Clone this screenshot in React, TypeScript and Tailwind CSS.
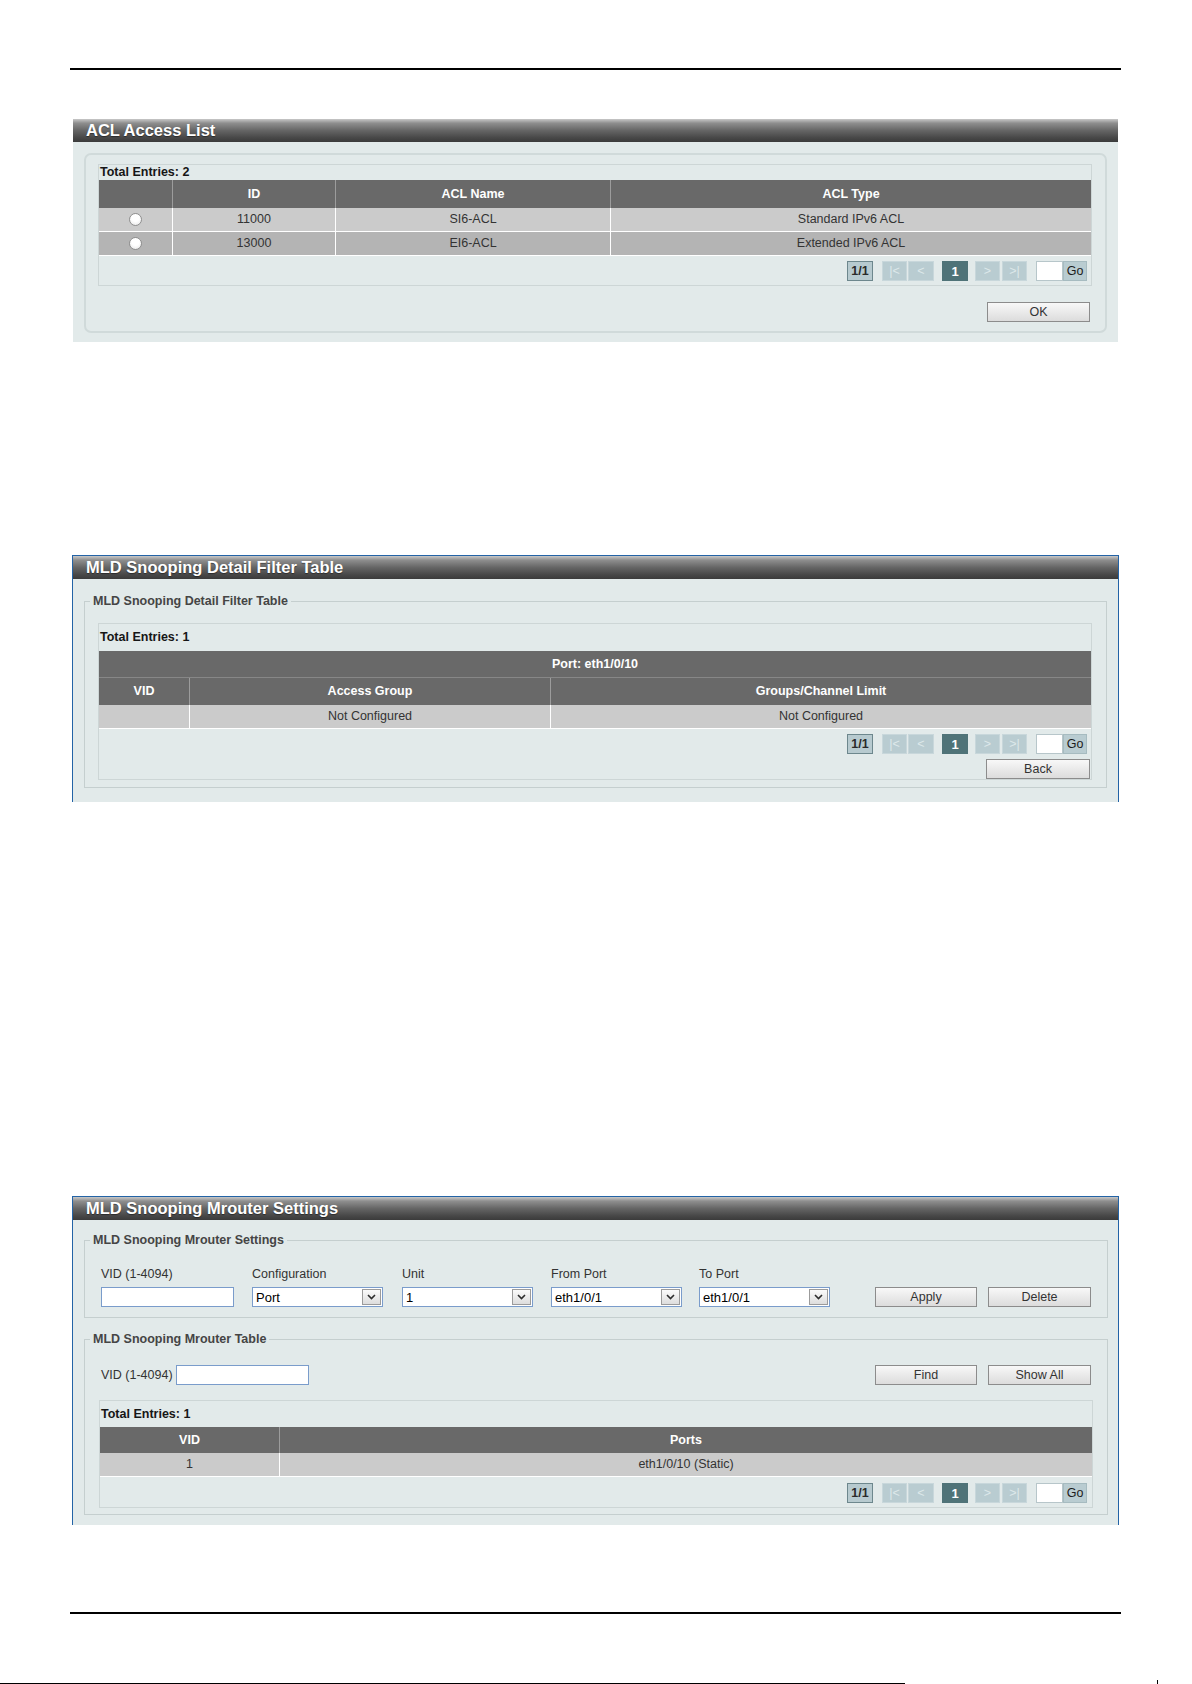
import React from "react";

const font = "font-['Liberation_Sans',Arial,Helvetica,sans-serif]";

const aclCols = "grid grid-cols-[73px_163px_275px_481px]";
const filterCols = "grid grid-cols-[90px_361px_541px]";
const mrouterCols = "grid grid-cols-[179px_813px]";

function TitleBar({ children }: { children: React.ReactNode }) {
  return (
    <div className="h-[23px] flex items-center pl-[13px] bg-[linear-gradient(to_bottom,#c8c8c8_0%,#8e8e8e_18%,#656565_50%,#474747_82%,#3b3b3b_100%)] text-white font-bold text-[16.5px] leading-none [text-shadow:0_1px_1px_rgba(0,0,0,0.45)]">
      {children}
    </div>
  );
}

function Panel({
  title,
  framed,
  className,
  children,
}: {
  title: string;
  framed?: boolean;
  className?: string;
  children: React.ReactNode;
}) {
  return (
    <section
      className={`ml-[72px] w-[1047px] border-x border-t ${
        framed ? "border-[#2363a6]" : "border-transparent"
      } ${className ?? ""}`}
    >
      <TitleBar>{title}</TitleBar>
      <div className="bg-[#e2eaea]">{children}</div>
    </section>
  );
}

function Btn({ label, className }: { label: string; className?: string }) {
  return (
    <button
      type="button"
      className={`block h-[20px] border border-[#8c8c8c] bg-[linear-gradient(to_bottom,#f8f8f8,#dcdcdc)] text-[12.5px] leading-none text-[#333] ${
        className ?? "w-[103px]"
      }`}
    >
      {label}
    </button>
  );
}

function PagerOff({ label, className }: { label: string; className: string }) {
  return (
    <span
      className={`h-[20px] flex items-center justify-center bg-[#b9ccd1] border border-[#c8d7db] text-[#dde8ea] ${className}`}
    >
      {label}
    </span>
  );
}

function Pager() {
  return (
    <div className="flex items-center justify-end h-[20px] text-[12.5px] leading-none">
      <span className="w-[26px] h-[20px] flex items-center justify-center bg-[#b7cacf] border border-[#6d878d] font-bold text-[#2a2a2a]">
        1/1
      </span>
      <PagerOff label="|<" className="ml-[9px] w-[25px]" />
      <PagerOff label="<" className="ml-[1px] w-[26px]" />
      <span className="ml-[8px] w-[26px] h-[20px] flex items-center justify-center bg-[#4f7378] font-bold text-[13px] text-white">
        1
      </span>
      <PagerOff label=">" className="ml-[7px] w-[25px]" />
      <PagerOff label=">|" className="ml-[2px] w-[25px]" />
      <span className="ml-[9px] w-[27px] h-[20px] bg-white border border-[#b7c6ca]" />
      <span className="w-[24px] h-[20px] flex items-center justify-center bg-[#b9ccd1] border border-[#a6bbc0] text-[#1c1c1c]">
        Go
      </span>
    </div>
  );
}

function Radio() {
  return (
    <span className="w-[13px] h-[13px] rounded-full border border-[#8f8f8f] bg-[radial-gradient(circle_at_50%_35%,#ffffff_40%,#e4e4e4_100%)]" />
  );
}

function TotalRow({ count, height }: { count: number; height: string }) {
  return (
    <div className={`${height} flex items-center pl-[1px] text-[12.5px] font-bold text-[#161616]`}>
      Total Entries: {count}
    </div>
  );
}

function HeadRow({ cols, cells, height }: { cols: string; cells: string[]; height: string }) {
  return (
    <div className={`${cols} ${height} bg-[#696969] text-white font-bold text-[12.5px]`}>
      {cells.map((c, i) => (
        <div
          key={i}
          className={`flex items-center justify-center ${i > 0 ? "border-l border-[#9c9c9c]" : ""}`}
        >
          {c}
        </div>
      ))}
    </div>
  );
}

function BodyRow({
  cols,
  cells,
  shade,
}: {
  cols: string;
  cells: React.ReactNode[];
  shade: string;
}) {
  return (
    <div className={`${cols} h-[24px] border-b border-white ${shade} text-[12.5px] text-[#333]`}>
      {cells.map((c, i) => (
        <div
          key={i}
          className={`flex items-center justify-center ${i > 0 ? "border-l border-white" : ""}`}
        >
          {c}
        </div>
      ))}
    </div>
  );
}

function Legend({ children }: { children: React.ReactNode }) {
  return (
    <legend className="px-[3px] text-[12.5px] leading-[16px] font-bold text-[#454545]">
      {children}
    </legend>
  );
}

function TextBox({ className }: { className?: string }) {
  return (
    <input
      type="text"
      className={`block w-[133px] h-[20px] bg-white border border-[#7a9ccb] outline-none ${className ?? ""}`}
    />
  );
}

function SelectBox({ value }: { value: string }) {
  return (
    <div className="w-[131px] h-[20px] bg-white border border-[#7a9ccb] flex items-center pl-[3px] pr-[1px]">
      <span className="flex-1 text-[13px] leading-none text-black">{value}</span>
      <span className="w-[19px] h-[16px] border border-[#9b9b9b] bg-[linear-gradient(to_bottom,#fbfbfb,#dddddd)] flex items-center justify-center">
        <svg width="9" height="6" viewBox="0 0 9 6">
          <path d="M1 1l3.5 3.5L8 1" fill="none" stroke="#2d2d2d" strokeWidth="1.6" />
        </svg>
      </span>
    </div>
  );
}

function Field({
  label,
  className,
  children,
}: {
  label: string;
  className?: string;
  children: React.ReactNode;
}) {
  return (
    <div className={`flex flex-col ${className ?? ""}`}>
      <span className="h-[16px] leading-[16px] text-[12.5px] text-[#333]">{label}</span>
      <div className="mt-[5px] h-[20px]">{children}</div>
    </div>
  );
}

export default function App() {
  return (
    <div className={`w-[1192px] h-[1684px] overflow-hidden bg-white pt-[68px] ${font}`}>
      <div className="ml-[70px] w-[1051px] h-[2px] bg-black" />

      {/* ACL access list */}
      <Panel title="ACL Access List" className="mt-[48px]">
        <div className="pt-[11px] px-[11px] pb-[9px]">
          <div className="rounded-[7px] border-2 border-[#d0dada] pt-[9px] pl-[12px] pr-[13px] pb-[9px]">
            <div className="border border-[#cdd6d6]">
              <TotalRow count={2} height="h-[15px]" />
              <HeadRow cols={aclCols} height="h-[28px]" cells={["", "ID", "ACL Name", "ACL Type"]} />
              <BodyRow
                cols={aclCols}
                shade="bg-[#cbcbcb]"
                cells={[<Radio key="r" />, "11000", "SI6-ACL", "Standard IPv6 ACL"]}
              />
              <BodyRow
                cols={aclCols}
                shade="bg-[#b4b4b4]"
                cells={[<Radio key="r" />, "13000", "EI6-ACL", "Extended IPv6 ACL"]}
              />
              <div className="pt-[5px] pb-[4px] pr-[4px]">
                <Pager />
              </div>
            </div>
            <div className="mt-[16px] flex justify-end pr-[2px]">
              <Btn label="OK" />
            </div>
          </div>
        </div>
      </Panel>

      {/* MLD snooping detail filter table */}
      <Panel framed title="MLD Snooping Detail Filter Table" className="mt-[213px]">
        <div className="pt-[14px] px-[11px] pb-[14px]">
          <fieldset className="border border-[#c5cfcf] px-[5px] pb-[7px]">
            <Legend>MLD Snooping Detail Filter Table</Legend>
            <div className="mt-[14px] ml-[8px] mr-[9px] border border-[#cdd6d6]">
              <TotalRow count={1} height="h-[27px]" />
              <div className="h-[27px] flex items-center justify-center bg-[#696969] border-b border-[#878787] text-white font-bold text-[12.5px]">
                Port: eth1/0/10
              </div>
              <HeadRow
                cols={filterCols}
                height="h-[27px]"
                cells={["VID", "Access Group", "Groups/Channel Limit"]}
              />
              <BodyRow
                cols={filterCols}
                shade="bg-[#cbcbcb]"
                cells={["", "Not Configured", "Not Configured"]}
              />
              <div className="pt-[5px] pr-[4px]">
                <Pager />
              </div>
              <div className="mt-[5px] flex justify-end pr-[1px]">
                <Btn label="Back" className="w-[104px]" />
              </div>
            </div>
          </fieldset>
        </div>
      </Panel>

      {/* MLD snooping mrouter settings */}
      <Panel framed title="MLD Snooping Mrouter Settings" className="mt-[394px]">
        <div className="pt-[12px] pl-[11px] pr-[10px] pb-[10px]">
          <fieldset className="border border-[#c5cfcf] px-[5px] pb-[10px]">
            <Legend>MLD Snooping Mrouter Settings</Legend>
            <div className="mt-[18px] pl-[11px] pr-[11px] flex items-end">
              <Field label="VID (1-4094)" className="w-[151px]">
                <TextBox />
              </Field>
              <Field label="Configuration" className="w-[150px]">
                <SelectBox value="Port" />
              </Field>
              <Field label="Unit" className="w-[149px]">
                <SelectBox value="1" />
              </Field>
              <Field label="From Port" className="w-[148px]">
                <SelectBox value="eth1/0/1" />
              </Field>
              <Field label="To Port">
                <SelectBox value="eth1/0/1" />
              </Field>
              <div className="ml-auto flex gap-[11px]">
                <Btn label="Apply" className="w-[102px]" />
                <Btn label="Delete" />
              </div>
            </div>
          </fieldset>

          <fieldset className="mt-[13px] border border-[#c5cfcf] px-[5px] pb-[6px]">
            <Legend>MLD Snooping Mrouter Table</Legend>
            <div className="mt-[18px] pl-[11px] pr-[11px] flex items-center h-[20px]">
              <span className="text-[12.5px] text-[#333]">VID (1-4094)</span>
              <TextBox className="ml-[3px]" />
              <div className="ml-auto flex gap-[11px]">
                <Btn label="Find" className="w-[102px]" />
                <Btn label="Show All" />
              </div>
            </div>
            <div className="mt-[15px] mx-[9px] border border-[#cdd6d6]">
              <TotalRow count={1} height="h-[26px]" />
              <HeadRow cols={mrouterCols} height="h-[26px]" cells={["VID", "Ports"]} />
              <BodyRow cols={mrouterCols} shade="bg-[#cbcbcb]" cells={["1", "eth1/0/10 (Static)"]} />
              <div className="pt-[6px] pb-[4px] pr-[5px]">
                <Pager />
              </div>
            </div>
          </fieldset>
        </div>
      </Panel>

      <div className="mt-[87px] ml-[70px] w-[1051px] h-[2px] bg-black" />
      <div className="mt-[66px] flex items-end h-[4px]">
        <div className="w-[905px] h-[1px] bg-black" />
        <div className="ml-[252px] w-[1px] h-[4px] bg-black" />
      </div>
    </div>
  );
}
